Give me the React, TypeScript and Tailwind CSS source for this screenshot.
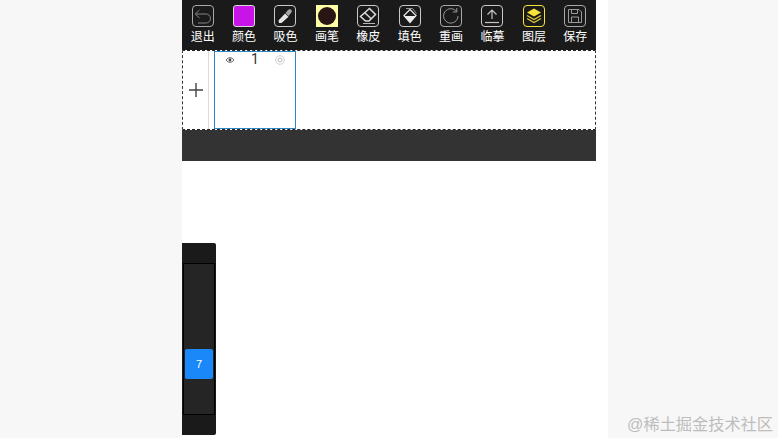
import type { ReactNode } from "react";

const stroke = "#c9c9c9";

// rounded outline shared by most toolbar icons
function IconBox({ children, color = stroke }: { children: ReactNode; color?: string }) {
  return (
    <svg width="22" height="22" viewBox="0 0 22 22" fill="none" className="block">
      <rect x="0.5" y="0.5" width="21" height="21" rx="3.5" stroke={color} />
      {children}
    </svg>
  );
}

const tools: { label: string; icon: ReactNode }[] = [
  {
    label: "退出",
    icon: (
      <IconBox color="#a8a8a8">
        <path d="M7.500 5 3.300 9l4.200 4M3.500 9H14a4.500 4.500 0 0 1 0 9H6" stroke="#858585" />
      </IconBox>
    ),
  },
  {
    label: "颜色",
    icon: <div className="h-[22px] w-[22px] rounded-[3px] border border-[#d8d8d8] bg-[#c814e6]" />,
  },
  {
    label: "吸色",
    icon: (
      <IconBox>
        <path d="M5 18 4.500 15.500 11 8.500l3.500 3.200L7.500 18z" fill="#e4e4e4" />
        <path d="M11.500 8 14 5c1.200-1.300 3-1 3.500 0 .6 1.200.2 2.200-.5 3l-2.500 3z" fill="#a6a6a6" />
      </IconBox>
    ),
  },
  {
    label: "画笔",
    icon: (
      <div className="flex h-[22px] w-[22px] items-center justify-center bg-[#ffffa8]">
        <div className="h-[18px] w-[18px] rounded-full bg-[#2a1515]" />
      </div>
    ),
  },
  {
    label: "橡皮",
    icon: (
      <IconBox>
        <path d="M12.500 3.500 18.500 9.500 12 16H8.500L3.500 11.500z" stroke="#dcdcdc" strokeWidth="1.500" />
        <path d="M7.500 7.500 14.500 14" stroke="#dcdcdc" strokeWidth="1.500" />
        <path d="M6 18.500h12" stroke="#b8b8b8" />
      </IconBox>
    ),
  },
  {
    label: "填色",
    icon: (
      <IconBox>
        <path d="M11 4.500 17 10.500 11 17.500 5 10.500z" stroke="#e0e0e0" strokeWidth="1.300" />
        <path d="M5 11h12l-6 6.500z" fill="#ececec" />
        <path d="M7 3.500h6.500l4 5" stroke="#9a9a9a" />
      </IconBox>
    ),
  },
  {
    label: "重画",
    icon: (
      <IconBox color="#a8a8a8">
        <path d="M16.500 6.500A7.200 7.200 0 1 0 18 11" stroke="#9a9a9a" />
        <path d="M16.800 3v4h-4" stroke="#9a9a9a" />
      </IconBox>
    ),
  },
  {
    label: "临摹",
    icon: (
      <IconBox>
        <path d="M11 14V5M6.500 9.500 11 5l4.500 4.500" stroke="#c4c4c4" strokeWidth="1.200" />
        <path d="M4 17.500h14" stroke="#c4c4c4" strokeWidth="1.200" />
      </IconBox>
    ),
  },
  {
    label: "图层",
    icon: (
      <IconBox color="#f7e339">
        <path d="M11 3.500 18 7.500 11 11.500 4 7.500z" fill="#f7e339" />
        <path d="M4 10.500 11 14.500 18 10.500" stroke="#d9c83a" strokeWidth="1.400" />
        <path d="M4 13.500 11 17.500 18 13.500" stroke="#d9c83a" strokeWidth="1.400" />
      </IconBox>
    ),
  },
  {
    label: "保存",
    icon: (
      <IconBox color="#a8a8a8">
        <path d="M4.500 4.500h10.500l2.500 2.500v10.500h-13z" stroke="#9a9a9a" />
        <path d="M7.500 4.500v4h6v-4M7.500 17.500v-5.500h7v5.500" stroke="#9a9a9a" />
      </IconBox>
    ),
  },
];

export default function App() {
  return (
    <div className="relative h-[438px] w-[778px] overflow-hidden bg-[#f7f7f7] pl-[182px] font-['Liberation_Sans','Noto_Sans_CJK_SC',sans-serif]">
      <div className="flex h-full w-[426px] flex-col bg-white">
        <div className="w-[414px]">
          {/* toolbar */}
          <div className="grid h-[50px] grid-cols-10 bg-[#1a1a1a] pt-[5px]">
            {tools.map((t) => (
              <div key={t.label} className="flex flex-col items-center">
                {t.icon}
                <span className="mt-[3px] text-xs leading-[15px] text-white">{t.label}</span>
              </div>
            ))}
          </div>

          {/* layers */}
          <div className="flex h-[80px] border-x border-dashed border-x-[#333] border-y border-y-[#222]">
            <div className="flex w-[26px] items-center justify-center border-r border-[#dcdcdc]">
              <svg width="14" height="14" viewBox="0 0 14 14" stroke="#444" strokeWidth="1.400">
                <path d="M7 0v14M0 7h14" />
              </svg>
            </div>
            <div className="ml-[5px] flex h-full w-[82px] items-start justify-between border border-[#2f86c4] px-[10px]">
              <svg width="10" height="10" viewBox="0 0 10 10" fill="none" className="mt-[3px]">
                <path d="M1 5C2.300 3.300 3.600 2.700 5 2.700S7.700 3.300 9 5C7.700 6.700 6.400 7.300 5 7.300S2.300 6.700 1 5z" stroke="#666" />
                <circle cx="5" cy="5" r="1.400" fill="#444" />
              </svg>
              <span className="font-['Roboto'] text-sm leading-[14px] text-[#333]">1</span>
              <svg width="10" height="10" viewBox="0 0 10 10" fill="none" className="mt-[3px]" stroke="#aaa" strokeWidth="0.800">
                <circle cx="5" cy="5" r="4.300" strokeDasharray="1.500 .5" />
                <circle cx="5" cy="5" r="2" />
              </svg>
            </div>
          </div>

          <div className="h-[31px] bg-[#333]" />

          {/* size slider */}
          <div className="mt-[82px] flex h-[192px] w-[34px] flex-col justify-center rounded-r-[2px] bg-[#1a1a1a] px-[1px]">
            <div className="flex h-[152px] items-start border border-black bg-[#252525] px-[1px] pt-[85px]">
              <div className="flex h-[30px] w-full items-center justify-center rounded-[2px] bg-[#1a88f8] text-[11px] text-white">
                7
              </div>
            </div>
          </div>
        </div>
      </div>

      <span className="absolute right-[5px] top-[414px] text-[16.200px] leading-5 text-[#bdbdbd]">@稀土掘金技术社区</span>
    </div>
  );
}
